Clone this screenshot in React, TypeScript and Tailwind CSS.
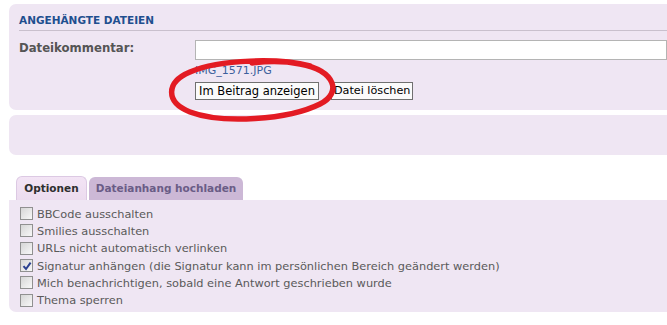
import React from "react"

const options = [
  { label: "BBCode ausschalten", checked: false },
  { label: "Smilies ausschalten", checked: false },
  { label: "URLs nicht automatisch verlinken", checked: false },
  {
    label:
      "Signatur anhängen (die Signatur kann im persönlichen Bereich geändert werden)",
    checked: true,
  },
  {
    label: "Mich benachrichtigen, sobald eine Antwort geschrieben wurde",
    checked: false,
  },
  { label: "Thema sperren", checked: false },
]

function Box({ checked }: { checked: boolean }) {
  return (
    <span className="flex h-[13px] w-[13px] shrink-0 items-center justify-center border border-[#909090] bg-gradient-to-br from-[#d6d6d6] to-[#f8f8f8]">
      {checked && (
        <svg viewBox="0 0 10 10" className="h-[10px] w-[10px]">
          <path
            d="M1.5 5.2 L4 8 L8.6 1.6"
            fill="none"
            stroke="#2a3f8f"
            strokeWidth="2"
          />
        </svg>
      )}
    </span>
  )
}

export default function App() {
  return (
    <div className="relative h-[325px] w-[667px] overflow-hidden bg-white pt-[4px] font-['DejaVu_Sans','Liberation_Sans',sans-serif]">
      {/* attachments panel */}
      <div className="ml-[9px] h-[106px] rounded-l-[7px] bg-[#efe6f3] pl-[10px] pt-[9px]">
        <div className="border-b border-[#c9c0cd] pb-[3px] text-[10.5px] font-bold leading-[14px] text-[#1f4f8f]">
          ANGEHÄNGTE DATEIEN
        </div>
        <div className="mt-[9px] flex">
          <div className="w-[176px] pt-[1px] text-[11.7px] font-bold leading-[14px] text-[#555]">
            Dateikommentar:
          </div>
          <div className="flex-1">
            <div className="h-[20px] border border-[#b4b4b4] bg-white" />
            <div className="mt-[4px] text-[11px] leading-[14px] text-[#3d5f9c]">
              IMG_1571.JPG
            </div>
            <div className="mt-[4px] flex gap-[12px]">
              <button className="h-[18px] border border-[#707070] bg-[#fbfbfb] px-[3px] text-[11.5px] leading-[14px] text-black">
                Im Beitrag anzeigen
              </button>
              <button className="h-[18px] border border-[#707070] bg-[#fbfbfb] px-[2px] text-[11.2px] leading-[14px] text-black">
                Datei löschen
              </button>
            </div>
          </div>
        </div>
      </div>

      {/* empty panel */}
      <div className="ml-[9px] mt-[5px] h-[40px] rounded-l-[7px] bg-[#efe6f3]" />

      {/* tabs */}
      <div className="ml-[16px] mt-[21px] flex items-end gap-[2px]">
        <div className="flex h-[24px] w-[71px] items-center justify-center rounded-t-[6px] border border-b-0 border-[#dcc9e3] bg-gradient-to-b from-[#f3e4f5] to-[#ecdcef] text-[10.5px] font-bold text-[#2f2f2f]">
          Optionen
        </div>
        <div className="flex h-[23px] w-[154px] items-center justify-center rounded-t-[6px] bg-[#ccb8d6] text-[10.5px] font-bold text-[#6a5c86]">
          Dateianhang hochladen
        </div>
      </div>

      {/* options panel */}
      <div className="ml-[9px] h-[112px] rounded-bl-[7px] bg-[#efe6f3] pl-[11px] pt-[5px]">
        {options.map((o) => (
          <div key={o.label} className="flex h-[17.3px] items-center gap-[4px]">
            <Box checked={o.checked} />
            <span className="text-[11.35px] leading-[14px] text-[#5a5a5a]">
              {o.label}
            </span>
          </div>
        ))}
      </div>

      {/* red marker circle */}
      <svg
        className="absolute left-[160px] top-[55px] h-[72px] w-[185px]"
        viewBox="0 0 185 72"
      >
        <path
          d="M150 11 C 120 3, 60 4, 30 17 C 6 27, 5 47, 30 57 C 62 69, 128 65, 160 49 C 182 38, 176 16, 140 9 C 120 5, 100 7, 92 8"
          fill="none"
          stroke="#e31b23"
          strokeWidth="5.5"
          strokeLinecap="round"
        />
      </svg>
    </div>
  )
}
